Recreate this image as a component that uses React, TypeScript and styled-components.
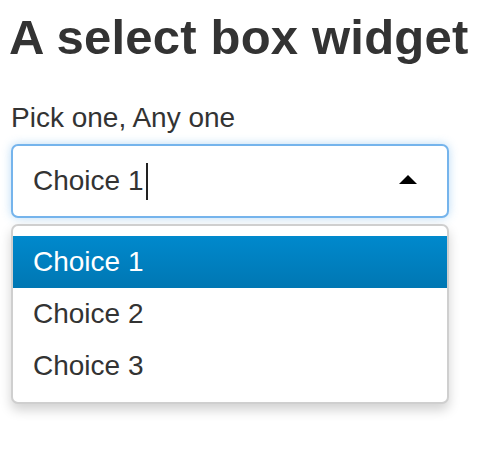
import styled, { createGlobalStyle } from 'styled-components'

const GlobalStyle = createGlobalStyle`
  body {
    margin: 0;
    background: #fff;
    font-family: "Liberation Sans", Arial, sans-serif;
    color: #333;
  }
`

const choices = ['Choice 1', 'Choice 2', 'Choice 3']

const App = () => {
    return (
        <Page>
            <GlobalStyle />
            <Title>A select box widget</Title>
            <Label>Pick one, Any one</Label>
            <SelectBox>
                <Current>
                    Choice 1
                    <Caret />
                </Current>
                <Arrow />
            </SelectBox>
            <Menu>
                {choices.map((c, i) => (
                    <Option key={c} active={i === 0}>{c}</Option>
                ))}
            </Menu>
        </Page>
    );
}

const Page = styled.div`
  padding: 10px 33px 30px 11px;
  width: 438px;
`
const Title = styled.h1`
  margin: 0 0 0 -2px;
  font-size: 49px;
  line-height: 54px;
  font-weight: bold;
  color: #333;
  white-space: nowrap;
  letter-spacing: 0.2px;
`
const Label = styled.div`
  margin-top: 38px;
  font-size: 28px;
  line-height: 32px;
  color: #333;
`
const SelectBox = styled.div`
  margin-top: 10px;
  box-sizing: border-box;
  height: 74px;
  display: flex;
  align-items: center;
  justify-content: space-between;
  padding: 0 30px 0 20px;
  border: 2px solid #75b4ec;
  border-radius: 7px;
  box-shadow: 0 0 10px rgba(102, 175, 233, 0.45);
  background: #fff;
`
const Current = styled.div`
  display: flex;
  align-items: center;
  font-size: 28px;
  color: #333;
`
const Caret = styled.span`
  display: inline-block;
  width: 2px;
  height: 37px;
  margin-left: 2px;
  background: #222;
`
const Arrow = styled.span`
  width: 0;
  height: 0;
  border-left: 9px solid transparent;
  border-right: 9px solid transparent;
  border-bottom: 9px solid #000;
  margin-top: -4px;
`
const Menu = styled.div`
  margin-top: 6px;
  box-sizing: border-box;
  padding: 10px 0;
  border: 2px solid #cfcfcf;
  border-radius: 7px;
  background: #fff;
  box-shadow: 0 6px 12px rgba(0, 0, 0, 0.18);
`
const Option = styled.div<{ active?: boolean }>`
  height: 52px;
  display: flex;
  align-items: center;
  padding-left: 20px;
  font-size: 28px;
  color: ${p => (p.active ? '#fff' : '#333')};
  background: ${p => (p.active ? 'linear-gradient(#0089cd, #0077b3)' : 'transparent')};
`

export default App;
